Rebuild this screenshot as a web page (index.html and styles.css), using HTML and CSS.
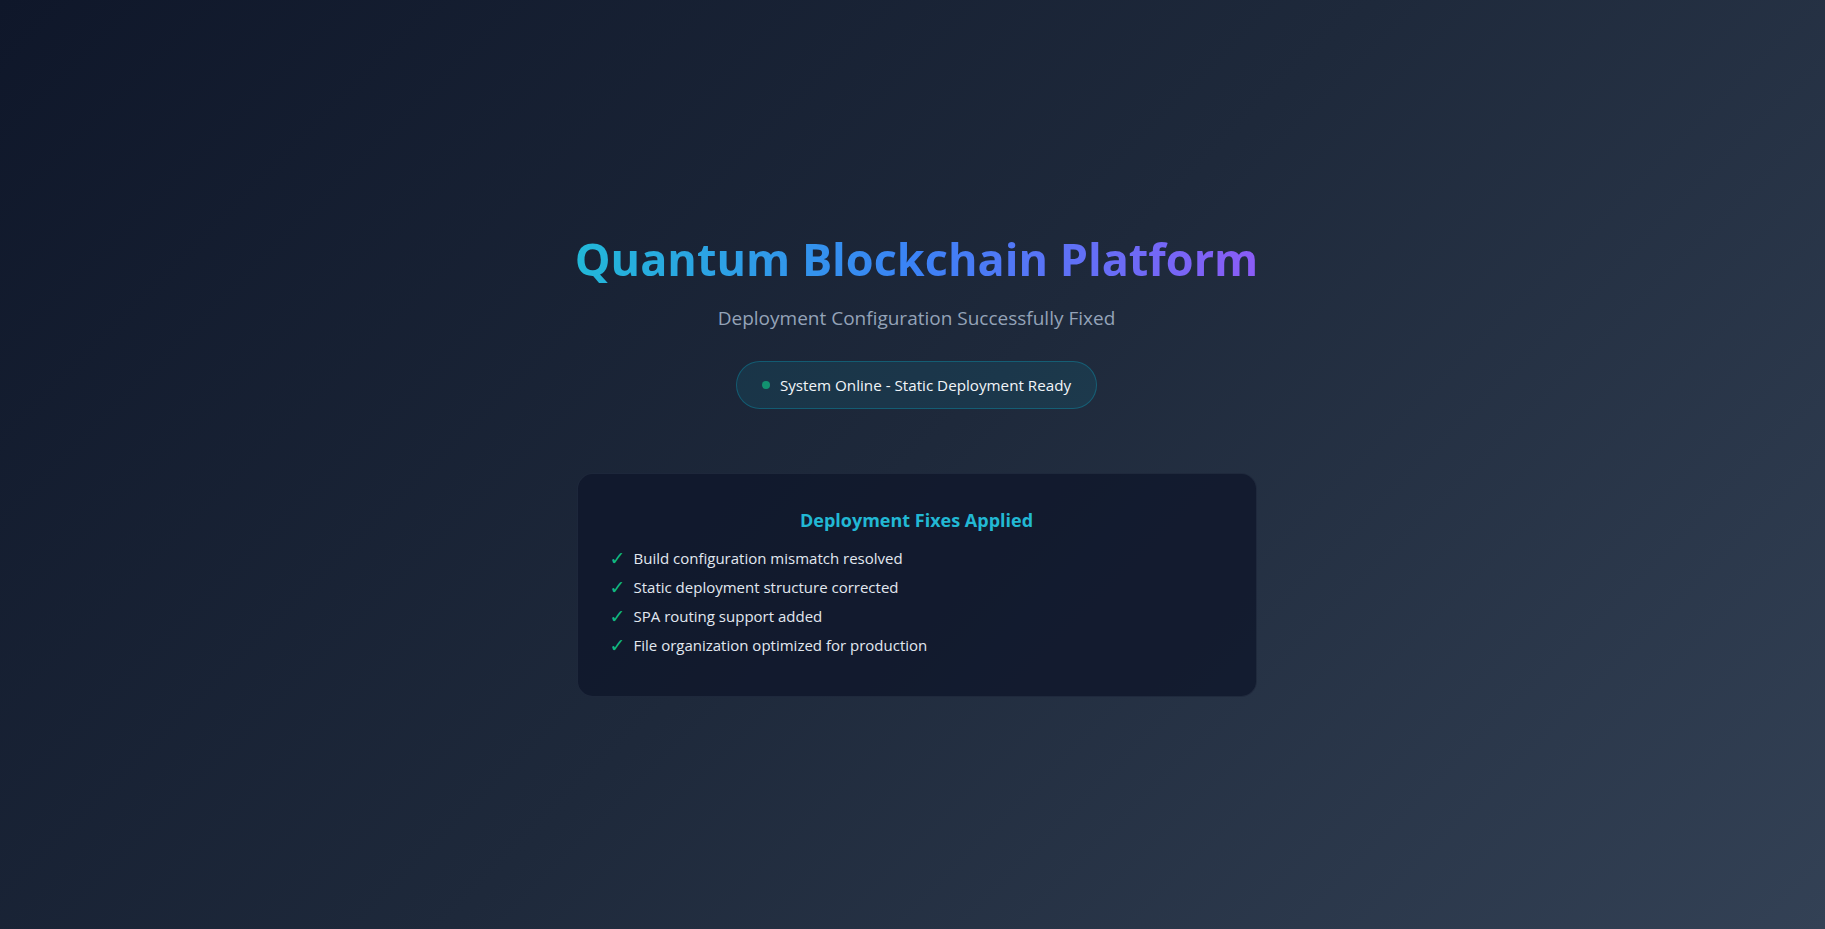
FILE: index.html
```html
<!DOCTYPE html>
<html lang="en">
<head>
<meta charset="utf-8">
<title>Quantum Blockchain Platform</title>
<link rel="stylesheet" href="styles.css">
</head>
<body>
<main class="page">
  <div class="container">
    <h1 class="title">Quantum Blockchain Platform</h1>
    <p class="subtitle">Deployment Configuration Successfully Fixed</p>
    <div class="status">
      <span class="status-dot"></span>
      <span class="status-text">System Online - Static Deployment Ready</span>
    </div>
    <section class="card">
      <h2 class="card-title">Deployment Fixes Applied</h2>
      <ul class="fix-list">
        <li class="fix-item"><span class="check">✓</span>Build configuration mismatch resolved</li>
        <li class="fix-item"><span class="check">✓</span>Static deployment structure corrected</li>
        <li class="fix-item"><span class="check">✓</span>SPA routing support added</li>
        <li class="fix-item"><span class="check">✓</span>File organization optimized for production</li>
      </ul>
    </section>
  </div>
</main>
</body>
</html>
```

FILE: styles.css
```css
* { box-sizing: border-box; }
html, body { margin: 0; padding: 0; height: 100%; }
body {
  font-family: "Open Sans", "Noto Sans", sans-serif;
  background: linear-gradient(135deg, #0f172a 0%, #1e293b 50%, #334155 100%);
  color: #e2e8f0;
}
.page {
  min-height: 100vh;
  padding-left: 8px;
  display: flex;
  align-items: center;
  justify-content: center;
}
.container {
  width: 680px;
  display: flex;
  flex-direction: column;
  align-items: center;
  text-align: center;
}
.title {
  margin: 0;
  white-space: nowrap;
  font-size: 45px;
  font-weight: 700;
  line-height: 1.2;
  letter-spacing: 0;
  background: linear-gradient(90deg, #22b8d8 0%, #3b82f6 50%, #8b5cf6 100%);
  -webkit-background-clip: text;
  background-clip: text;
  color: transparent;
}
.subtitle {
  margin: 18px 0 0;
  font-size: 19px;
  color: #94a3b8;
  line-height: 1.5;
}
.status {
  margin-top: 29px;
  display: inline-flex;
  align-items: center;
  gap: 10px;
  padding: 12px 25px;
  border-radius: 999px;
  background: rgba(6, 182, 212, 0.1);
  border: 1px solid rgba(6, 182, 212, 0.3);
  font-size: 15.2px;
  line-height: 22px;
  color: #f1f5f9;
}
.status-dot {
  width: 8px;
  height: 8px;
  border-radius: 50%;
  background: #10b981;
  opacity: 0.7;
}
.card {
  margin-top: 64px;
  width: 100%;
  padding: 34px 32px 36px;
  border-radius: 16px;
  background: rgba(15, 23, 42, 0.8);
  border: 1px solid rgba(148, 163, 184, 0.1);
  text-align: left;
}
.card-title {
  margin: 0 0 12px;
  text-align: center;
  font-size: 18px;
  font-weight: 700;
  line-height: 24px;
  color: #22b8d4;
}
.fix-list {
  list-style: none;
  margin: 0;
  padding: 0;
}
.fix-item {
  display: flex;
  align-items: center;
  font-size: 15px;
  line-height: 29px;
  color: #e2e8f0;
}
.check {
  width: 24px;
  font-family: "DejaVu Sans", sans-serif;
  font-size: 19px;
  color: #10b981;
}
```
